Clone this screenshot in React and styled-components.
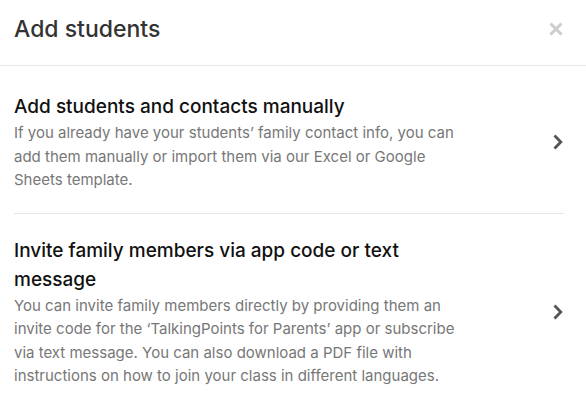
import React from 'react';
import styled, { createGlobalStyle } from 'styled-components';

const GlobalStyle = createGlobalStyle`
  body {
    margin: 0;
    background: #ffffff;
    font-family: 'Inter', 'Noto Sans', sans-serif;
  }
`;

const Modal = styled.div`
  width: 586px;
  height: 400px;
  overflow: hidden;
  background: #ffffff;
`;

const Header = styled.div`
  display: flex;
  align-items: center;
  justify-content: space-between;
  height: 66px;
  padding: 0 23px 8px 14px;
  box-sizing: border-box;
  border-bottom: 1px solid #e6e6e6;
`;

const Title = styled.h1`
  margin: 0;
  font-size: 23px;
  font-weight: 500;
  color: #333333;
`;

const Close = styled.button`
  border: 0;
  background: none;
  padding: 0;
  display: flex;
  cursor: pointer;
`;

const Body = styled.div`
  padding: 0 22px 0 14px;
`;

const Option = styled.div`
  display: flex;
  align-items: center;
  justify-content: space-between;
  padding: ${(p) => p.$pad};
  border-bottom: ${(p) => (p.$last ? 'none' : '1px solid #e6e6e6')};
  cursor: pointer;
`;

const Text = styled.div`
  max-width: 462px;
`;

const OptionTitle = styled.h2`
  margin: 0;
  font-size: 19px;
  font-weight: 500;
  line-height: 29px;
  color: #111111;
`;

const OptionDesc = styled.p`
  margin: 0;
  font-size: 15px;
  line-height: 23.5px;
  color: #777777;
`;

const Chevron = () => (
  <svg width="12" height="16" viewBox="0 0 12 16">
    <path d="M2.5 1.5 L8.8 8 L2.5 14.5" fill="none" stroke="#555" strokeWidth="2.8" />
  </svg>
);

const options = [
  {
    title: 'Add students and contacts manually',
    desc: 'If you already have your students’ family contact info, you can add them manually or import them via our Excel or Google Sheets template.',
    pad: '26px 0 21px',
  },
  {
    title: 'Invite family members via app code or text message',
    desc: 'You can invite family members directly by providing them an invite code for the ‘TalkingPoints for Parents’ app or subscribe via text message. You can also download a PDF file with instructions on how to join your class in different languages.',
    pad: '22px 0 20px',
  },
];

export default function App() {
  return (
    <Modal>
      <GlobalStyle />
      <Header>
        <Title>Add students</Title>
        <Close aria-label="Close">
          <svg width="14" height="14" viewBox="0 0 14 14">
            <path d="M1.5 1.5 L12.5 12.5 M12.5 1.5 L1.5 12.5" stroke="#cccccc" strokeWidth="3" />
          </svg>
        </Close>
      </Header>
      <Body>
        {options.map((o, i) => (
          <Option key={o.title} $pad={o.pad} $last={i === options.length - 1}>
            <Text>
              <OptionTitle>{o.title}</OptionTitle>
              <OptionDesc>{o.desc}</OptionDesc>
            </Text>
            <Chevron />
          </Option>
        ))}
      </Body>
    </Modal>
  );
}
